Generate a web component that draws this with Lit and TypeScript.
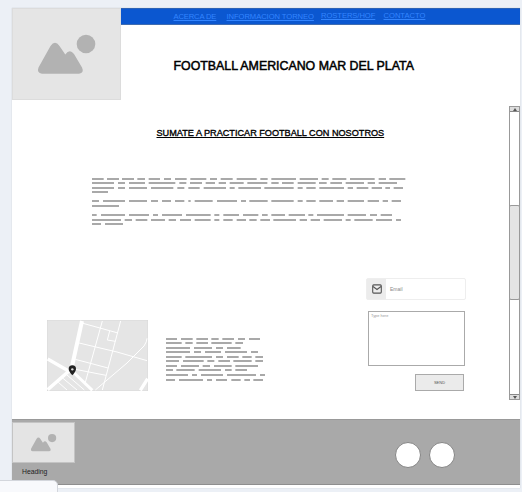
import { LitElement, html, svg, css } from "lit";
import { customElement, property } from "lit/decorators.js";

// Each row: vertical centre, then start/end pairs, in thirds of a pixel.
type Row = number[];

const INTRO: Row[] = [
  [9, 0,35,45,81,90,126,136,159,170,204,216,237,249,284,295,343,354,375,386,422,434,494,505,527,538,612,623,678,689,710,721,763,774,848,860,882,892,940],
  [21, 0,66,78,99,111,159,170,250,262,283,294,330,341,369,380,402,413,455,466,526,538,560,570,605,617,671,681,704,715,750,761,816,827,849,860,915],
  [36, 0,66,78,99,111,165,177,244,256,277,289,323,335,402,413,428,439,507,517,605,617,632,643,671,682,756,767,783,794,829,839,870,880,894,905,933],
  [48, 0,48],
  [75, 0,21,33,99,111,165,177,198,210,237,249,277,289,296,308,362,375,435,447,462,472,527,538,605,617,632,643,671,682,723,734,756,767,816,827,861,872,888,899,927],
  [90, 0,81],
  [117, 0,14,27,99,111,171,183,198,210,270,282,356,367,382,394,441,453,499,510,527,538,579,590,639,649,664,675,756,767,822,834,855,866,900],
  [132, 0,87,98,120,131,166,177,219,230,252,264,297,308,356,367,382,394,422,434,462,472,494,505,534,544,612,623,645,656,684,695,750,761,776,787,842,852,900,912,927],
  [144, 0,27,39,93],
];

const DETAILS: Row[] = [
  [6, 0,33,45,80,91,126,136,158,169,204,216,237,249,282],
  [18, 0,47,58,80,91,126,136,197,208,231],
  [33, 0,72,84,138,150,171,183,224],
  [45, 0,72,84,105,117,165,177,243,255,276],
  [60, 0,47,58,138,150,171,183,218,229,257,268,291],
  [72, 0,39,51,113,124,145,157,192,202,257,268,291],
  [87, 0,33,45,99,110,132,144,197,208,276],
  [99, 0,21,31,86,98,165,177,197,208,243],
  [114, 0,66,78,93,105,171,183,270,282,297],
  [129, 0,27,39,111,123,138,150,183,196,224,235,252,262,291],
];

@customElement("text-lines")
export class TextLines extends LitElement {
  @property({ attribute: false }) rows: Row[] = [];
  @property({ type: Number }) w = 0;
  @property({ type: Number }) h = 0;
  static styles = css`
    :host { display: block; }
    svg { display: block; }
  `;
  render() {
    const d = this.rows
      .map(([y, ...xs]) => xs.map((x, i) => (i % 2 ? `H${x}` : `M${x} ${y}`)).join(""))
      .join("");
    return html`<svg width=${this.w} height=${this.h} viewBox="0 0 ${this.w * 3} ${this.h * 3}">
      <path d=${d} stroke="#a9a9a9" stroke-width="5.6" fill="none" />
    </svg>`;
  }
}

const mountains = svg`
  <circle cx="74" cy="36" r="9.3" />
  <path d="M30 65.700Q24.500 65 26.500 59.500L38.500 38Q43 31.500 47.500 38L53.300 46.500Q57.700 40.500 62 46L70 59.500Q72.500 65 67 65.700Z" />
`;

@customElement("app-root")
export class AppRoot extends LitElement {
  static styles = css`
    :host {
      display: block; position: relative; width: 522px; height: 492px;
      overflow: hidden; box-sizing: border-box; padding: 8px 2px 0 12px;
      background: #ecf0f6; font-family: "Liberation Sans", Arial, sans-serif;
    }
    * { box-sizing: border-box; }
    svg { display: block; }
    .page { width: 508px; height: 480px; background: #fff; display: flex; flex-direction: column; box-shadow: 0 0 1px #bcc2ca; }
    header { display: flex; height: 92px; }
    .logo { width: 109px; height: 92px; background: #e5e5e5; border: 1px solid #dcdcdc; }
    .logo svg { margin: -1px; }
    .banner { flex: 1; }
    nav {
      height: 17px; background: #0b57d0; border-top: 1px solid #2c62b5; border-bottom: 1px solid #3f6cb0;
      display: flex; padding: 2px 0 0 52.500px; font-size: 7.600px; line-height: 10px;
    }
    nav a { color: #3385ff; text-decoration: underline; white-space: nowrap; }
    .n1 { width: 53px; padding-top: 1px; letter-spacing: -0.12px; }
    .n2 { width: 94.500px; padding-top: 1px; letter-spacing: -0.05px; }
    .n3 { width: 62.500px; letter-spacing: -0.05px; }
    .n4 { width: 50px; }
    h1 { margin: 34px 0 0 52.500px; font-size: 12.360px; line-height: 15px; font-weight: 400; color: #000; -webkit-text-stroke: 0.5px #000; white-space: nowrap; }
    .body { display: flex; height: 319px; }
    .content { width: 497px; }
    h2 { margin: 28px 0 0 144.500px; font-size: 9.150px; line-height: 11px; font-weight: 400; color: #000; text-decoration: underline; -webkit-text-stroke: 0.35px #000; white-space: nowrap; }
    .intro { margin: 37px 0 0 80px; }
    .row { display: flex; margin-top: 50px; }
    .map { width: 101px; height: 71px; margin: 42px 0 0 35px; }
    .details { margin: 59px 0 0 18px; }
    form { width: 100px; margin-left: 100px; }
    .email { display: flex; height: 22px; border: 1px solid #eee; border-radius: 2px; align-items: center; font-size: 5px; color: #888; }
    .icon { width: 19px; height: 20px; background: #ececec; display: grid; place-items: center; margin-right: 4px; }
    .message { width: 97px; height: 55px; margin: 11px 0 0 2px; border: 1px solid #aaa; padding: 1px 2px; font-size: 3.900px; line-height: 5px; color: #999; }
    .send { display: block; width: 49px; height: 17px; margin: 8px 0 0 49px; padding: 0; border: 1px solid #aaa; background: #ebebeb; font: 4px/15px "Liberation Sans", sans-serif; color: #555; }
    .scroll { width: 11px; height: 294px; margin-top: 6px; border: 1px solid #999; display: flex; flex-direction: column; }
    .cap { height: 5px; background: #ddd; border-bottom: 1px solid #888; display: grid; place-items: center; }
    .cap.down { border-bottom: 0; border-top: 1px solid #888; }
    .track { flex: 1; padding-top: 93px; }
    .thumb { height: 95px; margin: 0 -1px; background: #e4e4e4; border: 1px solid #999; border-radius: 2px; }
    footer { height: 66px; background: #a9a9a9; border-top: 1px solid #999; border-bottom: 1px solid #8e8e8e; display: flex; }
    .brand { width: 383px; padding-top: 2px; }
    .mini { width: 63px; height: 41px; background: #e4e4e4; border: 1px solid #c4c4c4; }
    .mini svg { margin: -1px; }
    .heading { margin: 4px 0 0 10px; font-size: 6.800px; line-height: 9px; color: #222; }
    .dot { width: 26px; height: 26px; border-radius: 50%; background: #fff; border: 1px solid #858585; margin: 22px 8px 0 0; }
    .status { position: absolute; left: -2px; bottom: -2px; width: 60px; height: 14px; background: #f8f9fc; border: 1px solid #d3d6dc; border-radius: 0 5px 0 0; }
  `;

  render() {
    return html`
      <div class="page">
        <header>
          <div class="logo"><svg width="109" height="92" fill="#b2b2b2">${mountains}</svg></div>
          <div class="banner">
            <nav>
              <a class="n1">ACERCA DE</a><a class="n2">INFORMACION TORNEO</a><a class="n3">ROSTERS/HOF</a><a class="n4">CONTACTO</a>
            </nav>
            <h1>FOOTBALL AMERICANO MAR DEL PLATA</h1>
          </div>
        </header>
        <div class="body">
          <div class="content">
            <h2>SUMATE A PRACTICAR FOOTBALL CON NOSOTROS</h2>
            <text-lines class="intro" .rows=${INTRO} w="315" h="52"></text-lines>
            <div class="row">
              <svg class="map" viewBox="0 0 303 213">
                <rect x="1" y="1" width="301" height="211" fill="#e5e5e5" stroke="#d8d8d8" stroke-width="2" />
                <g fill="none" stroke="#fff" stroke-width="3">
                  <path d="M108 10L213 39M92 68L210 96L300 122M85 118L183 144M80 147L177 166M166 3L115 187M221 3L166 210M188 33L181 60L205 64M300 55Q300 65 291 78L240 129L145 210M48 175L90 210M60 165L112 210M34 187L60 210" />
                  <path d="M105 3L72 153" stroke-width="12" />
                  <path d="M2 117L70 156M2 209L72 148M280 211L302 176" stroke-width="10" />
                  <path d="M72 150L136 211" stroke-width="9" />
                </g>
                <path d="M76 166Q65 154 65 147A11 11 0 0 1 87 147Q87 154 76 166Z" fill="#222" />
                <circle cx="76" cy="148" r="3.500" fill="#ddd" />
              </svg>
              <text-lines class="details" .rows=${DETAILS} w="100" h="46"></text-lines>
              <form>
                <div class="email">
                  <div class="icon"><svg width="10" height="10" viewBox="0 0 10 10" fill="none" stroke="#555" stroke-width="1.1"><rect x=".7" y=".9" width="8.600" height="8.200" rx="1" /><path d="M1 2.500L5 5.500L9 2.500" /></svg></div>
                  Email
                </div>
                <div class="message">Type here</div>
                <button class="send" type="button">SEND</button>
              </form>
            </div>
          </div>
          <div class="scroll">
            <div class="cap"><svg width="4" height="3"><path d="M0 3L2 0L4 3Z" fill="#555" /></svg></div>
            <div class="track"><div class="thumb"></div></div>
            <div class="cap down"><svg width="4" height="3"><path d="M0 0L2 3L4 0Z" fill="#555" /></svg></div>
          </div>
        </div>
        <footer>
          <div class="brand">
            <div class="mini"><svg width="63" height="41" viewBox="-17 -0.500 143 93" fill="#b2b2b2">${mountains}</svg></div>
            <div class="heading">Heading</div>
          </div>
          <div class="dot"></div>
          <div class="dot"></div>
        </footer>
      </div>
      <div class="status"></div>
    `;
  }
}
